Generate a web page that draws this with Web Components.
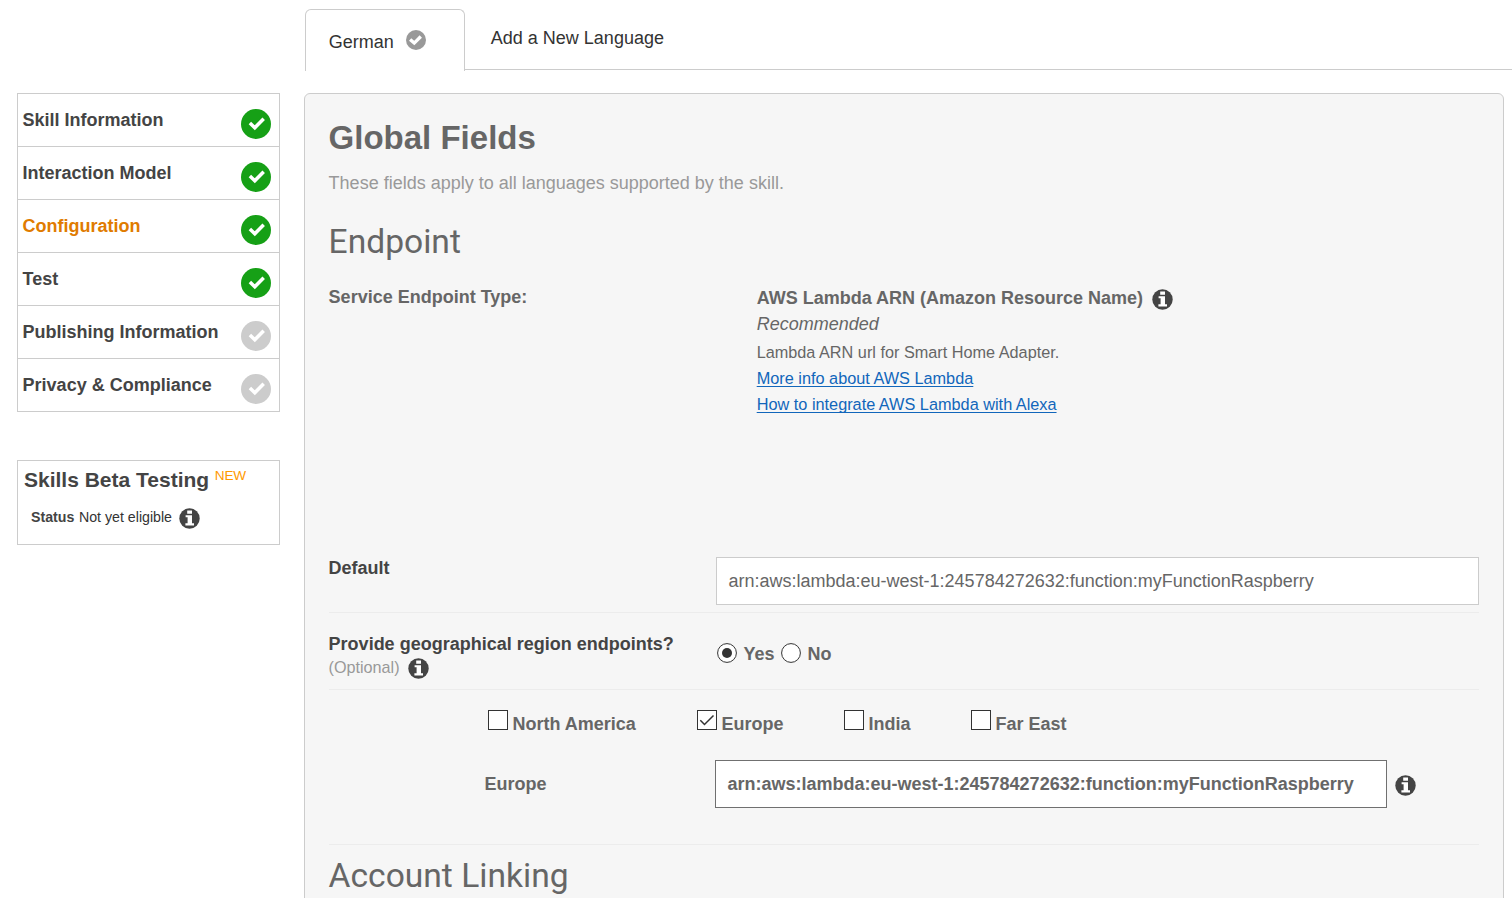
<!DOCTYPE html>
<html lang="en">
<head>
<meta charset="utf-8">
<title>Skill configuration</title>
<style>
html,body{margin:0;height:100%;overflow:hidden;background:#fff}
body{font:18px/24px "Liberation Sans",Arial,sans-serif;color:#666}
</style>
</head>
<body>
<skill-page></skill-page>
<script>
const define=(name,html)=>customElements.define(name,class extends HTMLElement{
  connectedCallback(){
    if(this.shadowRoot)return;
    const t=document.createElement('template');
    t.innerHTML=typeof html==='function'?html(this):html;
    this.attachShadow({mode:'open'}).append(t.content.cloneNode(true));
  }
});

define('check-badge',e=>`<style>
:host{display:block;flex:none;width:30px;height:30px;color:#16a016}
:host([off]){color:#ccc}
:host([small]){width:20px;height:20px;color:#999}
svg{display:block;width:100%;height:100%}
</style><svg viewBox="0 0 30 30"><circle cx="15" cy="15" r="15" fill="currentColor"/>${
e.hasAttribute('small')
?'<path d="M6.2 14.2 12.4 19.6 22.2 9.8" fill="none" stroke="#fff" stroke-width="5"/>'
:'<path d="M8.9 14.1 13.8 18.8 22.7 9.8" fill="none" stroke="#fff" stroke-width="3.5"/>'}</svg>`);

define('info-badge',`<style>
:host{display:block;flex:none;width:21px;height:21px}
svg{display:block}
</style><svg width="21" height="21" viewBox="0 0 21 21"><circle cx="10.5" cy="10.5" r="10.2" fill="#444"/><path d="M8.2 2.5h4.8v3.2H8.2zM6.6 7.2h6.4v8h2v2.2H6.4v-2.2h2.2V9.3h-2z" fill="#fff"/></svg>`);

define('language-tabs',`<style>
:host{display:flex;align-items:flex-start;height:61px;margin:9px 0 0 305px;color:#333}
.tab{box-sizing:border-box;width:160px;height:62px;border:1px solid #ccc;border-bottom:0;border-radius:6px 6px 0 0;display:flex;align-items:flex-start;padding:20px 0 0 22.8px}
.tab check-badge{margin-left:12.2px}
.rest{flex:1;box-sizing:border-box;height:61px;border-bottom:1px solid #ccc;padding:17px 0 0 25.8px}
</style><div class="tab"><span>German</span><check-badge small></check-badge></div><div class="rest">Add a New Language</div>`);

define('nav-step',`<style>
:host{display:flex;height:52px;border-bottom:1px solid #ccc;justify-content:space-between;padding:0 8px 0 4.6px;font-weight:bold;color:#444}
:host([current]){color:#e07b00}
span{margin-top:14px;white-space:nowrap}
::slotted(check-badge){margin-top:15px}
</style><span><slot></slot></span><slot name="badge"></slot>`);

define('skill-nav',`<style>
:host{display:block;border:1px solid #ccc;border-bottom:0}
</style>
<nav-step>Skill Information<check-badge slot="badge"></check-badge></nav-step>
<nav-step>Interaction Model<check-badge slot="badge"></check-badge></nav-step>
<nav-step current>Configuration<check-badge slot="badge"></check-badge></nav-step>
<nav-step>Test<check-badge slot="badge"></check-badge></nav-step>
<nav-step>Publishing Information<check-badge slot="badge" off></check-badge></nav-step>
<nav-step>Privacy &amp; Compliance<check-badge slot="badge" off></check-badge></nav-step>`);

define('beta-card',`<style>
:host{display:block;box-sizing:border-box;height:85px;border:1px solid #ccc;margin-top:48px;padding:7px 6px;color:#444}
.head{display:flex;font-size:21px;font-weight:bold;white-space:nowrap}
.new{font-size:13.6px;font-weight:normal;color:#f90;margin:-4px 0 0 5.6px;letter-spacing:-.2px}
.status{display:flex;font-size:14.2px;margin:13px 0 0 7px;color:#333}
.status b{color:#444;margin-right:4.6px}
info-badge{margin:3px 0 0 7.4px}
</style><div class="head">Skills Beta Testing<span class="new">NEW</span></div>
<div class="status"><b>Status</b>Not yet eligible<info-badge></info-badge></div>`);

define('text-field',`<style>
:host{display:flex;align-items:center;box-sizing:border-box;height:48px;border:1px solid #ccc;background:#fff;padding-left:11.5px}
:host([strong]){border-color:#707070;font-weight:bold}
</style><slot></slot>`);

define('choice-option',e=>`<style>
:host{display:flex;font-weight:bold;white-space:nowrap}
svg{display:block;flex:none}
span{margin-left:${e.hasAttribute('radio')?'6.5px':'4.5px'};margin-top:${e.hasAttribute('radio')?'-1px':'2px'}}
</style><svg width="20" height="20" viewBox="0 0 20 20" fill="#fff" stroke="#333">${
e.hasAttribute('radio')?`<circle cx="10" cy="10" r="9.4"/>${e.hasAttribute('checked')?'<circle cx="10" cy="10" r="5" fill="#333" stroke="none"/>':''}`
:`<rect x=".5" y=".5" width="19" height="19"/>${e.hasAttribute('checked')?'<path d="m3.3 10.2 4.2 4.3 9-9" fill="none" stroke-width="1.5"/>':''}`
}</svg><span><slot></slot></span>`);

define('endpoint-info',`<style>
:host{display:block;line-height:26px}
.title{display:flex;font-weight:bold}
info-badge{margin:4px 0 0 9px}
.note{font-size:16.25px;margin-top:2px}
a{display:block;width:max-content;font-size:16.3px;color:#1166bb;text-decoration:underline;text-underline-offset:2px;text-decoration-skip-ink:none;text-decoration-thickness:1px}
</style><div class="title">AWS Lambda ARN (Amazon Resource Name)<info-badge></info-badge></div>
<i>Recommended</i><div class="note">Lambda ARN url for Smart Home Adapter.</div>
<a>More info about AWS Lambda</a><a>How to integrate AWS Lambda with Alexa</a>`);

define('global-fields',`<style>
:host{display:block;box-sizing:border-box;height:830px;border:1px solid #ccc;border-radius:6px;background:#f6f6f6;padding:24px 24px 0}
h1,h2{margin:0;line-height:40px;white-space:nowrap}
h1{font-size:33px}
h2{font:33.6px/40px Roboto,sans-serif}
h1,h2,.hint,.row>b,.service>b,.geo>div>b,.target>b{text-indent:-.4px}
.hint{color:#999;margin:13px 0 27px}
.row{display:grid;box-sizing:border-box;border-bottom:1px solid #ececec}
.service{display:grid;grid-template-columns:427.7px 1fr;height:270px;padding-top:23px;box-sizing:border-box}
.default{grid-template-columns:387px 1fr;height:57px;padding-top:1px;align-items:start;margin-top:24px}
.default b{margin-top:-1px}
.geo{grid-template-columns:388px 1fr;height:77px;padding-top:19px}
.regions{height:155px;display:block;padding:20px 0 0}
b{display:block}.dark{color:#444}
.optional{display:flex;font-size:16.2px;color:#999;text-indent:-.5px;margin-top:-1px}
.optional info-badge{margin:3px 0 0 8px}
.choices{display:flex}
.geo .choices{padding-top:11px;gap:6.5px}
.regions .choices{padding-left:159px}
.target{display:grid;grid-template-columns:230px 672px 21px;padding:24px 0 0 156px}
.target b{margin-top:12px}.target info-badge{margin:15px 0 0 8px}
.account{margin-top:11px}
choice-option.na{width:209px}choice-option.eu{width:147px}choice-option.in{width:127px}
</style>
<h1>Global Fields</h1><div class="hint">These fields apply to all languages supported by the skill.</div>
<h2>Endpoint</h2>
<div class="service"><b>Service Endpoint Type:</b><endpoint-info></endpoint-info></div>
<div class="row default"><b class="dark">Default</b><text-field>arn:aws:lambda:eu-west-1:245784272632:function:myFunctionRaspberry</text-field></div>
<div class="row geo"><div><b class="dark">Provide geographical region endpoints?</b><div class="optional">(Optional)<info-badge></info-badge></div></div>
<div class="choices"><choice-option radio checked>Yes</choice-option><choice-option radio>No</choice-option></div></div>
<div class="row regions"><div class="choices"><choice-option class="na">North America</choice-option><choice-option class="eu" checked>Europe</choice-option><choice-option class="in">India</choice-option><choice-option>Far East</choice-option></div>
<div class="target"><b>Europe</b><text-field strong>arn:aws:lambda:eu-west-1:245784272632:function:myFunctionRaspberry</text-field><info-badge></info-badge></div></div>
<h2 class="account">Account Linking</h2>`);

define('skill-page',`<style>
:host{display:block;height:898px;overflow:hidden}
main{display:grid;grid-template-columns:263px 1200px;column-gap:24px;padding:23px 0 0 17px;align-items:start}
</style><language-tabs></language-tabs><main><aside><skill-nav></skill-nav><beta-card></beta-card></aside><global-fields></global-fields></main>`);
</script>
</body>
</html>
